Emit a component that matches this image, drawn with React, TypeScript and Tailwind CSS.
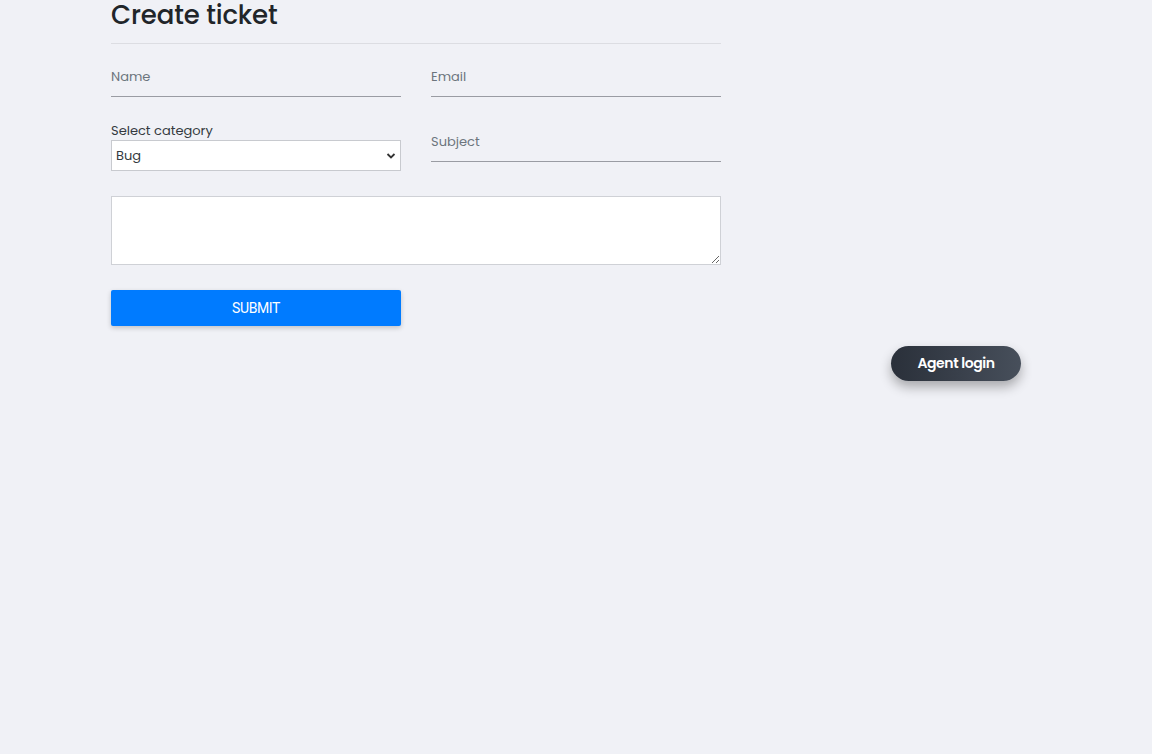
import React from "react";

export default function App() {
  return (
    <div className="min-h-[754px] w-full bg-[#f0f1f6] relative" style={{ fontFamily: "Poppins, 'Open Sans', Inter, sans-serif" }}>
      <div className="ml-[111px] w-[610px]">
        <h1 className="text-[26px] leading-[30px] font-medium text-[#212529] pt-0 tracking-[-0.15px]">Create ticket</h1>
        <div className="mt-[13px] h-px bg-[#dcdde2]" />
        <div className="grid grid-cols-2 gap-x-[30px] mt-[20px]">
          <div className="h-[33px] border-b border-[#9a9ca3] flex items-start">
            <input placeholder="Name" className="w-full bg-transparent outline-none text-[13px] leading-[26px] text-[#495057] placeholder:text-[#6c757d] pt-0" />
          </div>
          <div className="h-[33px] border-b border-[#9a9ca3] flex items-start">
            <input placeholder="Email" className="w-full bg-transparent outline-none text-[13px] leading-[26px] text-[#495057] placeholder:text-[#6c757d]" />
          </div>
          <div className="mt-[25px]">
            <div className="text-[13px] leading-[18px] text-[#343a40]">Select category</div>
            <div className="relative h-[31px] bg-white border border-[#c8cacf] flex items-center">
              <span className="pl-[4px] pt-[1px] text-[13px] text-[#343a40]">Bug</span>
              <svg className="absolute right-[4px] top-[11px]" width="10" height="8" viewBox="0 0 10 8">
                <path d="M1.5 2 L5 5.5 L8.5 2" stroke="#333" strokeWidth="1.8" fill="none" />
              </svg>
            </div>
          </div>
          <div className="mt-[25px] h-[40px] border-b border-[#9a9ca3] flex items-start">
            <input placeholder="Subject" className="w-full bg-transparent outline-none text-[13px] leading-[40px] text-[#495057] placeholder:text-[#6c757d]" />
          </div>
        </div>
        <textarea className="mt-[25px] block w-[610px] h-[69px] bg-white border border-[#cfd1d6] outline-none" />
        <button className="mt-[25px] w-[290px] h-[36px] bg-[#007bff] text-white text-[14px] tracking-[-0.4px] rounded-[2px] shadow-[0_2px_5px_rgba(0,0,0,0.2)]" style={{ fontFamily: "Roboto, sans-serif" }}>
          SUBMIT
        </button>
      </div>
      <button className="absolute left-[891px] top-[346px] w-[130px] h-[35px] rounded-full bg-gradient-to-r from-[#2a303a] to-[#474f5b] text-white text-[14px] font-semibold tracking-[-0.4px] shadow-[0_6px_12px_rgba(0,0,0,0.3)]">
        Agent login
      </button>
    </div>
  );
}
